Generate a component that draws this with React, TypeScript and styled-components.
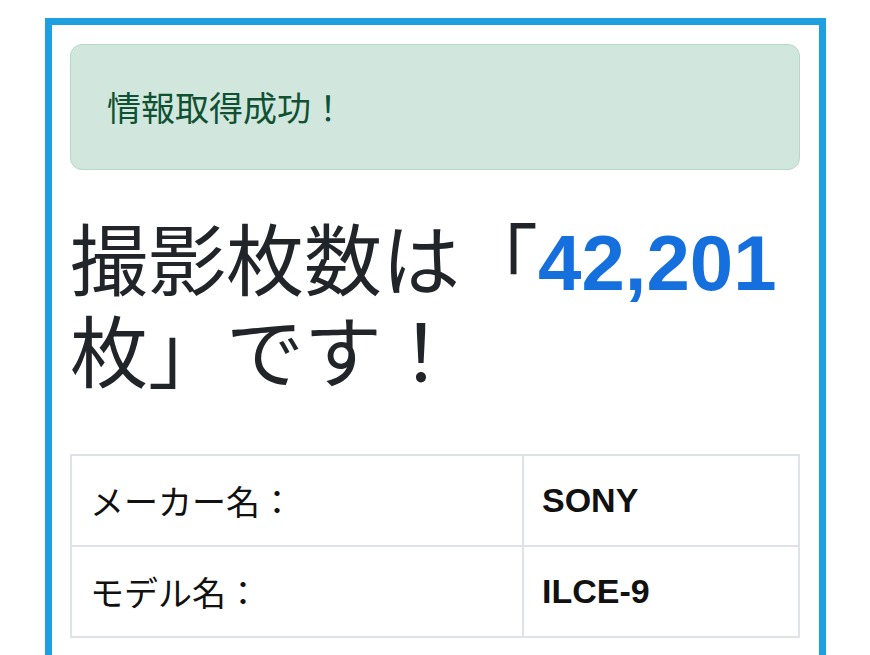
import React from "react";
import styled, { createGlobalStyle } from "styled-components";

const GlobalStyle = createGlobalStyle`
  body {
    margin: 0;
    background: #ffffff;
    color: #212529;
    font-family: "Liberation Sans", "Noto Sans CJK JP", sans-serif;
  }
`;

const Frame = styled.main`
  box-sizing: border-box;
  width: 781px;
  min-height: 700px;
  margin: 18px 0 0 45px;
  padding: 19px 19px 0 18px;
  border: 7px solid #1ea0e0;
  border-bottom: none;
`;

const Alert = styled.div`
  padding: 38px 36px;
  border: 1px solid #b7d8c8;
  border-radius: 12px;
  background: #d1e7dd;
  color: #0f5132;
  font-family: "Noto Sans CJK JP", sans-serif;
  font-size: 34px;
  line-height: 48px;
`;

const Heading = styled.h1`
  margin: 40px 0 60px;
  font-family: "Noto Sans CJK JP", sans-serif;
  font-size: 78px;
  font-weight: 400;
  line-height: 92px;
  color: #212529;
`;

const Count = styled.span`
  font-family: "Liberation Sans", sans-serif;
  font-weight: 700;
  line-height: 1;
  color: #1570de;
`;

const InfoTable = styled.table`
  width: 100%;
  border-collapse: collapse;
  table-layout: fixed;
`;

const Label = styled.td`
  width: 414px;
  height: 89px;
  padding: 0 18px;
  border: 2px solid #dfe3e8;
  font-family: "Noto Sans CJK JP", sans-serif;
  font-size: 34px;
  color: #111111;
`;

const Value = styled.td`
  padding: 0 18px;
  border: 2px solid #dfe3e8;
  font-family: "Liberation Sans", sans-serif;
  font-size: 34px;
  font-weight: 700;
  color: #111111;
`;

const rows = [
  { label: "メーカー名：", value: "SONY" },
  { label: "モデル名：", value: "ILCE-9" },
];

export default function App() {
  return (
    <>
      <GlobalStyle />
      <Frame>
        <Alert>情報取得成功！</Alert>
        <Heading>
          撮影枚数は「<Count>42,201</Count>枚」です！
        </Heading>
        <InfoTable>
          <tbody>
            {rows.map((row) => (
              <tr key={row.label}>
                <Label>{row.label}</Label>
                <Value>{row.value}</Value>
              </tr>
            ))}
          </tbody>
        </InfoTable>
      </Frame>
    </>
  );
}
